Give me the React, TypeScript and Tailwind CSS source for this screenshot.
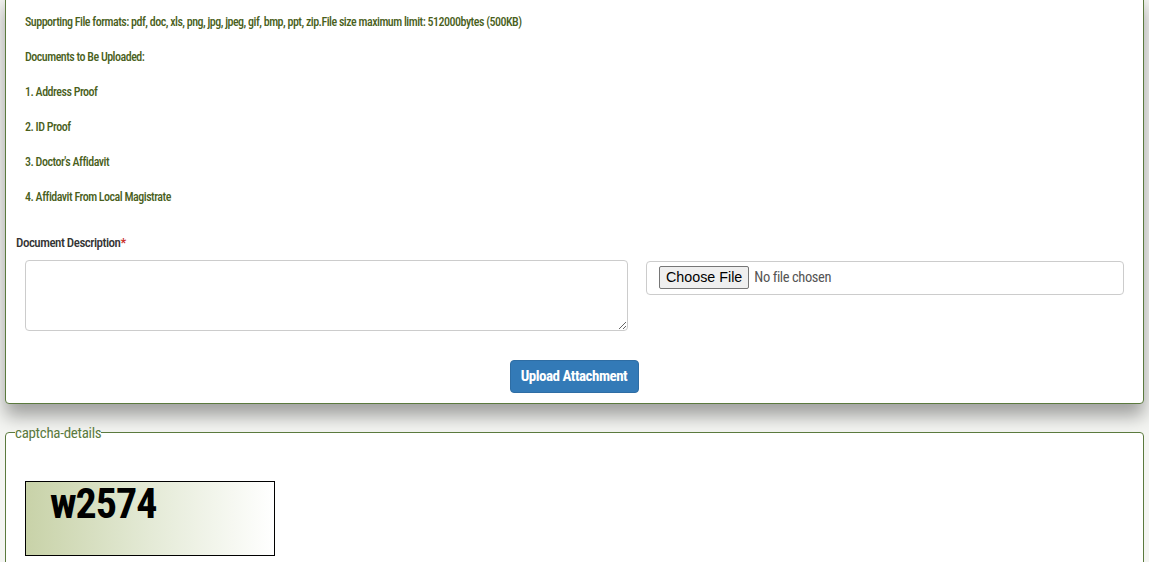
import React from "react";

const docs = [
  "1. Address Proof",
  "2. ID Proof",
  "3. Doctor's Affidavit",
  "4. Affidavit From Local Magistrate",
];

function UploadPanel() {
  return (
    <div className="mx-[5px] -mt-[6px] rounded-[4px] border border-[#5b7a3e] bg-white shadow-[0_12px_18px_rgba(0,0,0,0.35)]">
      <div className="px-[19px] pt-[17px] text-[12px] font-medium tracking-[-0.5px] text-[#4a5f1c]">
        <p className="leading-[20px]">
          Supporting File formats: pdf, doc, xls, png, jpg, jpeg, gif, bmp, ppt, zip.File size maximum limit: 512000bytes (500KB)
        </p>
        <p className="mt-[15px] leading-[20px]">Documents to Be Uploaded:</p>
        {docs.map((d) => (
          <p key={d} className="mt-[15px] leading-[20px]">{d}</p>
        ))}
      </div>

      <label className="mt-[26px] block px-[10px] text-[13px] font-medium tracking-[-0.5px] text-[#333]">
        Document Description<span className="text-[#c9302c]">*</span>
      </label>

      <div className="mt-[7px] flex items-start gap-[18px] px-[19px]">
        <textarea className="h-[71px] w-[603px] resize rounded-[4px] border border-[#ccc] outline-none" />
        <div className="mt-[1px] flex h-[34px] flex-1 items-center rounded-[4px] border border-[#ccc] pl-[12px]">
          <span className="rounded-[2px] border border-[#767676] bg-[#efefef] px-[6px] py-[1px] font-['Liberation_Sans',Arial,sans-serif] text-[14.3px] leading-[19px] text-black">
            Choose File
          </span>
          <span className="ml-[5px] text-[14.5px] tracking-[-0.4px] text-[#555]">No file chosen</span>
        </div>
      </div>

      <div className="flex justify-center pt-[29px] pb-[10px]">
        <button className="ml-[-1px] h-[33px] w-[129px] whitespace-nowrap rounded-[4px] border border-[#2e6da4] bg-[#337ab7] text-[15px] font-bold tracking-[-0.5px] text-white">
          Upload Attachment
        </button>
      </div>
    </div>
  );
}

function CaptchaFieldset() {
  return (
    <fieldset className="mx-[5px] mt-[20px] rounded-[4px] border border-[#5b7a3e] bg-white px-[19px] pb-[20px]">
      <legend className="ml-[-10px] px-0 text-[15px] leading-[18px] tracking-[-0.3px] text-[#5b7a3e]">captcha-details</legend>
      <div className="mt-[39px] h-[75px] w-[250px] border border-black bg-gradient-to-r from-[#c8d2a8] via-[#e4ead6] to-white">
        <span className="ml-[24px] mt-[2px] block text-[42px] font-bold leading-[40px] tracking-[-1px] text-black">
          w2574
        </span>
      </div>
    </fieldset>
  );
}

export default function App() {
  return (
    <div className="min-h-[562px] overflow-hidden bg-[#f4f5f2] font-['Roboto_Condensed','Open_Sans_Condensed',sans-serif]">
      <UploadPanel />
      <CaptchaFieldset />
    </div>
  );
}
